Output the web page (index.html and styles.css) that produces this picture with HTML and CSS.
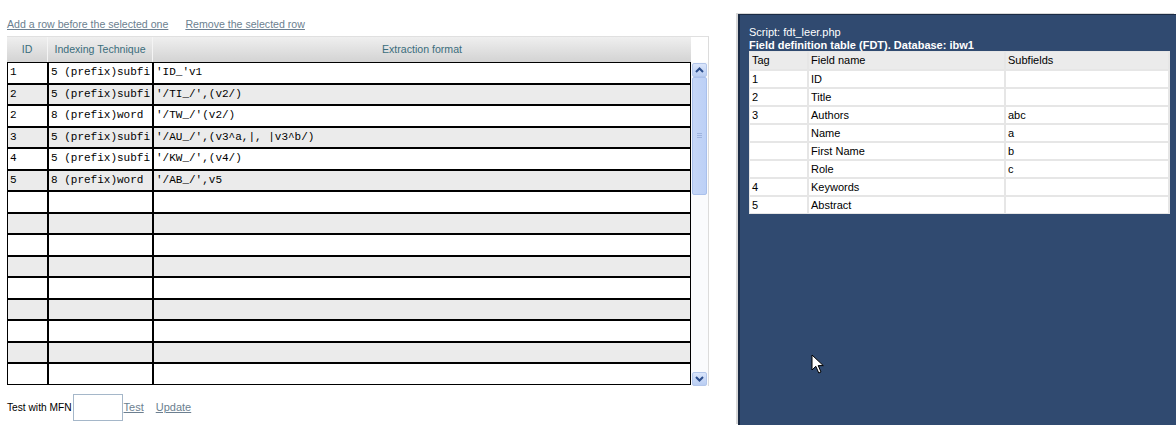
FILE: index.html
```html
<!DOCTYPE html>
<html>
<head>
<meta charset="utf-8">
<link rel="stylesheet" href="styles.css">
</head>
<body>
<div class="page">
  <section class="editor">
    <div class="actions">
      <a class="link" href="#">Add a row before the selected one</a>
      <a class="link" href="#">Remove the selected row</a>
    </div>
    <div class="grid">
      <div class="grid-main">
        <div class="ghead">
          <div class="hc">ID</div>
          <div class="hc">Indexing Technique</div>
          <div class="hc">Extraction format</div>
        </div>
        <div class="grow odd"><div class="gc">1</div><div class="gc">5 (prefix)subfi</div><div class="gc">'ID_'v1</div></div>
        <div class="grow even"><div class="gc">2</div><div class="gc">5 (prefix)subfi</div><div class="gc">'/TI_/',(v2/)</div></div>
        <div class="grow odd"><div class="gc">2</div><div class="gc">8 (prefix)word</div><div class="gc">'/TW_/'(v2/)</div></div>
        <div class="grow even"><div class="gc">3</div><div class="gc">5 (prefix)subfi</div><div class="gc">'/AU_/',(v3^a,|, |v3^b/)</div></div>
        <div class="grow odd"><div class="gc">4</div><div class="gc">5 (prefix)subfi</div><div class="gc">'/KW_/',(v4/)</div></div>
        <div class="grow even"><div class="gc">5</div><div class="gc">8 (prefix)word</div><div class="gc">'/AB_/',v5</div></div>
        <div class="grow odd"><div class="gc"></div><div class="gc"></div><div class="gc"></div></div>
        <div class="grow even"><div class="gc"></div><div class="gc"></div><div class="gc"></div></div>
        <div class="grow odd"><div class="gc"></div><div class="gc"></div><div class="gc"></div></div>
        <div class="grow even"><div class="gc"></div><div class="gc"></div><div class="gc"></div></div>
        <div class="grow odd"><div class="gc"></div><div class="gc"></div><div class="gc"></div></div>
        <div class="grow even"><div class="gc"></div><div class="gc"></div><div class="gc"></div></div>
        <div class="grow odd"><div class="gc"></div><div class="gc"></div><div class="gc"></div></div>
        <div class="grow even"><div class="gc"></div><div class="gc"></div><div class="gc"></div></div>
        <div class="grow odd"><div class="gc"></div><div class="gc"></div><div class="gc"></div></div>
      </div>
      <div class="sbcol">
        <div class="sbhead"></div>
        <div class="sb">
          <div class="sbbtn">
            <svg width="15" height="14" viewBox="0 0 15 14"><path d="M4 9 L7.5 5.5 L11 9" fill="none" stroke="#2b4d8c" stroke-width="2"/></svg>
          </div>
          <div class="thumb">
            <svg width="7" height="8" viewBox="0 0 7 8"><path d="M1 1.5H6M1 3.5H6M1 5.5H6" stroke="#9db3de" stroke-width="1"/></svg>
          </div>
          <div class="track"></div>
          <div class="sbbtn">
            <svg width="15" height="14" viewBox="0 0 15 14"><path d="M4 5 L7.5 8.5 L11 5" fill="none" stroke="#2b4d8c" stroke-width="2"/></svg>
          </div>
        </div>
      </div>
    </div>
    <div class="testline">
      <span class="lbl">Test with MFN</span>
      <input class="mfn" type="text">
      <a class="link tst" href="#">Test</a>
      <a class="link upd" href="#">Update</a>
    </div>
  </section>
  <aside class="fdt">
    <div class="script">Script: fdt_leer.php</div>
    <div class="fdt-title">Field definition table (FDT). Database: ibw1</div>
    <div class="ftable">
      <div class="fh">Tag</div><div class="fh">Field name</div><div class="fh">Subfields</div>
      <div class="fc">1</div><div class="fc">ID</div><div class="fc"></div>
      <div class="fc">2</div><div class="fc">Title</div><div class="fc"></div>
      <div class="fc">3</div><div class="fc">Authors</div><div class="fc">abc</div>
      <div class="fc"></div><div class="fc">Name</div><div class="fc">a</div>
      <div class="fc"></div><div class="fc">First Name</div><div class="fc">b</div>
      <div class="fc"></div><div class="fc">Role</div><div class="fc">c</div>
      <div class="fc">4</div><div class="fc">Keywords</div><div class="fc"></div>
      <div class="fc">5</div><div class="fc">Abstract</div><div class="fc"></div>
    </div>
    <svg class="cursor" width="15" height="21" viewBox="0 0 15 21"><path d="M1 1 L1 16 L4.8 12.3 L7.8 19 L10 18 L7.2 11.6 L12.3 11.6 Z" fill="#fff" stroke="#000" stroke-width="1" stroke-linejoin="round"/></svg>
  </aside>
</div>
</body>
</html>
```
FILE: styles.css
```css
html, body {
  margin: 0;
  padding: 0;
  background: #fff;
}
body {
  font-family: "Liberation Sans", Arial, sans-serif;
  font-size: 10.6px;
  color: #000;
  width: 1176px;
  height: 425px;
  overflow: hidden;
}
.page {
  display: flex;
  align-items: flex-start;
  height: 425px;
}
.editor {
  width: 710px;
  padding-left: 7px;
  box-sizing: border-box;
  margin-right: 29px;
}
.actions {
  display: flex;
  gap: 17px;
  padding-top: 18px;
  height: 18px;
  line-height: 13px;
}
.link {
  color: #6c7f90;
  text-decoration: underline;
}
.grid {
  display: flex;
  width: 702px;
  border-top: 1px solid #e0e0e0;
  border-right: 1px solid #dcdcdc;
  box-sizing: border-box;
}
.grid-main {
  width: 684px;
}
.ghead {
  display: grid;
  grid-template-columns: 41px 105px 1fr;
  height: 25px;
  background: linear-gradient(#efefef, #d3d3d3);
}
.hc {
  color: #3b6d7c;
  text-align: center;
  line-height: 24px;
  border-right: 1px solid #f4f4f4;
}
.hc:last-child { border-right: none; }
.grow {
  display: grid;
  grid-template-columns: 41px 105px 1fr;
}
.grow.odd { height: 22px; background: #fff; }
.grow.even { height: 21px; background: #ebebeb; }
.gc {
  border: 1px solid #000;
  box-sizing: border-box;
  font-family: "Liberation Mono", "Courier New", monospace;
  font-size: 11px;
  line-height: 19px;
  padding-left: 2px;
  white-space: pre;
  overflow: hidden;
}
.sbcol {
  width: 17px;
  display: flex;
  flex-direction: column;
}
.sbhead {
  height: 25px;
  background: #fff;
}
.sb {
  height: 323px;
  display: flex;
  flex-direction: column;
  padding-left: 1px;
  padding-top: 1px;
  background: #fafbfd;
}
.sbbtn {
  width: 15px;
  height: 14px;
  background: linear-gradient(#dbe6fb, #b9cdf2);
  border: 1px solid #b3c6ea;
  border-radius: 2px;
  box-sizing: border-box;
  display: flex;
}
.sbbtn svg { display: block; margin: -1px; }
.thumb {
  width: 15px;
  height: 118px;
  background: linear-gradient(90deg, #c5d6f7, #bcd0f6);
  border: 1px solid #a9c0ec;
  border-radius: 2px;
  box-sizing: border-box;
  display: flex;
  align-items: center;
  justify-content: center;
}
.track {
  flex: 1;
}
.testline {
  display: flex;
  align-items: center;
  height: 34px;
  margin-top: 4px;
  font-size: 10.2px;
}
.lbl { margin-right: 1px; }
.mfn {
  width: 50px;
  height: 27px;
  box-sizing: border-box;
  border: 1px solid #a5b7c9;
  margin: 0;
  padding: 0;
}
.tst { margin-left: 1px; font-size: 11px; }
.upd { margin-left: 12px; font-size: 11px; }
.fdt {
  position: relative;
  flex: 1;
  align-self: stretch;
  margin-top: 14px;
  background: #304a70;
  border-top: 1px solid #1b2b44;
  border-left: 2px solid #1b2b44;
  box-shadow: -2px -1px 0 #d8d8d8;
  padding: 11px 6px 0 9px;
  color: #fff;
  font-size: 11px;
}
.script {
  line-height: 13px;
}
.fdt-title {
  font-weight: bold;
  line-height: 12px;
}
.ftable {
  display: grid;
  grid-template-columns: 57px 195px 1fr;
  grid-template-rows: 17px repeat(8, 16px);
  gap: 2px;
  background: #e6e6e6;
  padding: 1px 2px 1px 1px;
  width: 421px;
  box-sizing: border-box;
  color: #000;
}
.fh {
  background: #ebebeb;
  padding-left: 2px;
  line-height: 17px;
}
.fc {
  background: #fff;
  padding-left: 2px;
  line-height: 16px;
}
.cursor {
  position: absolute;
  left: 71px;
  top: 339px;
}
```
